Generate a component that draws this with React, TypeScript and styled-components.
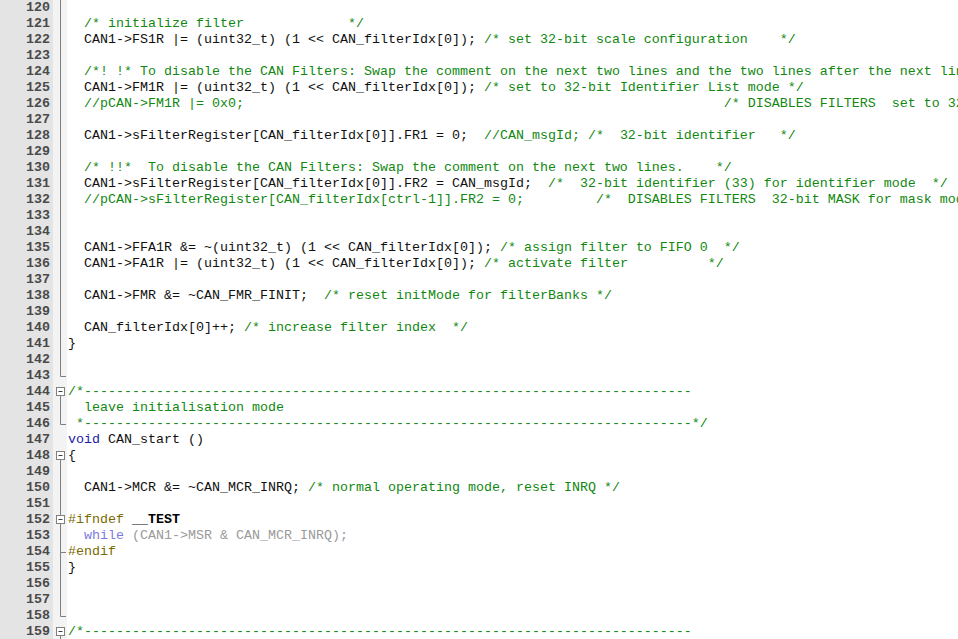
import React from "react";
import styled, { createGlobalStyle } from "styled-components";

const Global = createGlobalStyle`
  html, body { margin: 0; padding: 0; background: #ffffff; overflow: hidden; }
  #root { width: 958px; height: 639px; overflow: hidden; }
`;

type Kind = "t" | "c" | "k" | "p" | "b" | "i" | "ik";
type Seg = [Kind, string];
type FoldKind = "v" | "end" | "box" | "boxin" | "tick" | "none";

const dash = "-".repeat(76);

const lines: { n: number; segs: Seg[]; fold: FoldKind }[] = [];

const add = (n: number, fold: FoldKind, ...segs: Seg[]) => lines.push({ n, segs, fold });

add(120, "v");
add(121, "v", ["c", "  /* initialize filter             */"]);
add(122, "v", ["t", "  CAN1->FS1R |= (uint32_t) (1 << CAN_filterIdx[0]); "], ["c", "/* set 32-bit scale configuration    */"]);
add(123, "v");
add(124, "v", ["c", "  /*! !* To disable the CAN Filters: Swap the comment on the next two lines and the two lines after the next line */"]);
add(125, "v", ["t", "  CAN1->FM1R |= (uint32_t) (1 << CAN_filterIdx[0]); "], ["c", "/* set to 32-bit Identifier List mode */"]);
add(126, "v", ["c", "  //pCAN->FM1R |= 0x0;" + " ".repeat(60) + "/* DISABLES FILTERS  set to 32-bit Identifier Mask mode */"]);
add(127, "v");
add(128, "v", ["t", "  CAN1->sFilterRegister[CAN_filterIdx[0]].FR1 = 0;  "], ["c", "//CAN_msgId; /*  32-bit identifier   */"]);
add(129, "v");
add(130, "v", ["c", "  /* !!*  To disable the CAN Filters: Swap the comment on the next two lines.    */"]);
add(131, "v", ["t", "  CAN1->sFilterRegister[CAN_filterIdx[0]].FR2 = CAN_msgId;  "], ["c", "/*  32-bit identifier (33) for identifier mode  */"]);
add(132, "v", ["c", "  //pCAN->sFilterRegister[CAN_filterIdx[ctrl-1]].FR2 = 0;" + " ".repeat(9) + "/*  DISABLES FILTERS  32-bit MASK for mask mode */"]);
add(133, "v");
add(134, "v");
add(135, "v", ["t", "  CAN1->FFA1R &= ~(uint32_t) (1 << CAN_filterIdx[0]); "], ["c", "/* assign filter to FIFO 0  */"]);
add(136, "v", ["t", "  CAN1->FA1R |= (uint32_t) (1 << CAN_filterIdx[0]); "], ["c", "/* activate filter          */"]);
add(137, "v");
add(138, "v", ["t", "  CAN1->FMR &= ~CAN_FMR_FINIT;  "], ["c", "/* reset initMode for filterBanks */"]);
add(139, "v");
add(140, "v", ["t", "  CAN_filterIdx[0]++; "], ["c", "/* increase filter index  */"]);
add(141, "v", ["t", "}"]);
add(142, "v");
add(143, "end");
add(144, "box", ["c", "/*" + dash]);
add(145, "v", ["c", "  leave initialisation mode"]);
add(146, "end", ["c", " *" + dash + "*/"]);
add(147, "none", ["k", "void"], ["t", " CAN_start ()"]);
add(148, "box", ["t", "{"]);
add(149, "v");
add(150, "v", ["t", "  CAN1->MCR &= ~CAN_MCR_INRQ; "], ["c", "/* normal operating mode, reset INRQ */"]);
add(151, "v");
add(152, "boxin", ["p", "#ifndef"], ["t", " "], ["b", "__TEST"]);
add(153, "v", ["i", "  "], ["ik", "while"], ["i", " (CAN1->MSR & CAN_MCR_INRQ);"]);
add(154, "tick", ["p", "#endif"]);
add(155, "v", ["t", "}"]);
add(156, "v");
add(157, "v");
add(158, "end");
add(159, "box", ["c", "/*" + dash]);

const colors: Record<Kind, string> = {
  t: "#111111",
  c: "#118811",
  k: "#1a1aa6",
  p: "#7a6a00",
  b: "#000000",
  i: "#9a9a9a",
  ik: "#7a7ae0",
};

const Editor = styled.div`
  display: flex;
  flex-direction: column;
  font-family: "Liberation Mono", "Courier New", monospace;
  font-size: 13.333px;
  line-height: 16px;
`;

const Row = styled.div`
  display: grid;
  grid-template-columns: 53px 14px 1fr;
  height: 16px;
`;

const LineNo = styled.div`
  background: #e4e4e4;
  color: #4a4a4a;
  font-weight: bold;
  text-align: right;
  padding-right: 3px;
`;

const FoldCell = styled.div`
  background: #f3f3f3;
  display: flex;
  svg { display: block; }
`;

const Code = styled.div`
  padding-left: 1px;
  white-space: pre;
  overflow: hidden;
  color: #111;
`;

const Tok = styled.span<{ $kind: Kind }>`
  color: ${(p) => colors[p.$kind]};
  font-weight: ${(p) => (p.$kind === "b" ? "bold" : "normal")};
`;

const FoldMark: React.FC<{ kind: FoldKind }> = ({ kind }) => {
  const stroke = "#808080";
  const x = 7.5;
  return (
    <svg width="14" height="16" viewBox="0 0 14 16">
      {kind === "v" && <line x1={x} y1={0} x2={x} y2={16} stroke={stroke} />}
      {kind === "end" && (
        <path d={`M${x} 0 V8.5 H13`} stroke={stroke} fill="none" />
      )}
      {kind === "tick" && (
        <path d={`M${x} 0 V16 M${x} 8.5 H13`} stroke={stroke} fill="none" />
      )}
      {(kind === "box" || kind === "boxin") && (
        <>
          {kind === "boxin" && <line x1={x} y1={0} x2={x} y2={3.5} stroke={stroke} />}
          <rect x={3.5} y={3.5} width={8} height={8} fill="#ffffff" stroke={stroke} />
          <line x1={5.5} y1={7.5} x2={9.5} y2={7.5} stroke="#404040" />
          <line x1={x} y1={11.5} x2={x} y2={16} stroke={stroke} />
        </>
      )}
    </svg>
  );
};

export default function App() {
  return (
    <>
      <Global />
      <Editor>
        {lines.map((l) => (
          <Row key={l.n}>
            <LineNo>{l.n}</LineNo>
            <FoldCell>
              <FoldMark kind={l.fold} />
            </FoldCell>
            <Code>
              {l.segs.map((s, i) => (
                <Tok key={i} $kind={s[0]}>
                  {s[1]}
                </Tok>
              ))}
            </Code>
          </Row>
        ))}
      </Editor>
    </>
  );
}
